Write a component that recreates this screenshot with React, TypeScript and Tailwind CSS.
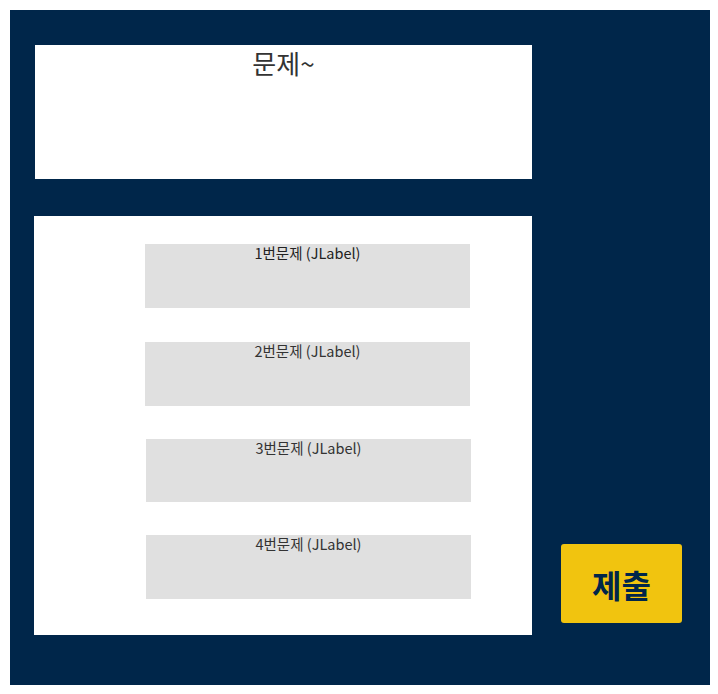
export default function App() {
  const labels = [
    { t: "1번문제 (JLabel)", mt: "mt-[28px]", ml: "ml-[111px]", h: "h-[64px]", c: "text-[#222]" },
    { t: "2번문제 (JLabel)", mt: "mt-[34px]", ml: "ml-[111px]", h: "h-[64px]", c: "text-[#333]" },
    { t: "3번문제 (JLabel)", mt: "mt-[33px]", ml: "ml-[112px]", h: "h-[63px]", c: "text-[#333]" },
    { t: "4번문제 (JLabel)", mt: "mt-[33px]", ml: "ml-[112px]", h: "h-[64px]", c: "text-[#333]" },
  ];
  return (
    <div
      className="w-[718px] h-[694px] bg-white p-[10px]"
      style={{ fontFamily: '"Noto Sans CJK KR", "Noto Sans", sans-serif' }}
    >
      <div className="w-[700px] h-[675px] bg-[#00264a] flex">
        <div className="flex flex-col w-[522px]">
          <div className="mt-[35px] ml-[25px] w-[497px] h-[134px] bg-white flex justify-center">
            <span className="text-[26px] leading-[36px] text-[#333] mt-[0px]">문제~</span>
          </div>
          <div className="mt-[37px] ml-[24px] w-[498px] h-[419px] bg-white flex flex-col">
            {labels.map((l) => (
              <div
                key={l.t}
                className={`${l.mt} ${l.ml} ${l.h} w-[325px] bg-[#e0e0e0] flex justify-center`}
              >
                <span className={`text-[14.5px] leading-[18px] ${l.c}`}>{l.t}</span>
              </div>
            ))}
          </div>
        </div>
        <div className="flex flex-col">
          <button className="mt-[534px] ml-[29px] w-[121px] h-[79px] bg-[#f1c40f] rounded-[3px] flex items-center justify-center text-[32px] font-bold text-[#00264a]">
            제출
          </button>
        </div>
      </div>
    </div>
  );
}
